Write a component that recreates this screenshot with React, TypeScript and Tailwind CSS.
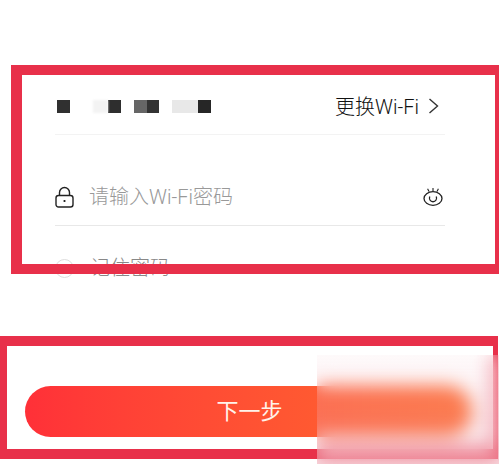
export default function App() {
  return (
    <div className="relative w-[499px] h-[464px] overflow-hidden bg-white font-['Roboto','Noto_Sans_CJK_SC',sans-serif] font-light">
      <div className="flex flex-col pl-[55px] pr-[54px] pt-[85px]">
        {/* Wi-Fi name row */}
        <div className="flex items-center justify-between h-[50px] border-b border-[#f3f3f3] pb-[7px]">
          <div className="flex items-center h-[13px] w-[156px] pl-[2px]">
            <div className="w-[13px] h-[13px] bg-[#303030]" />
            <div className="ml-[23px] w-[15px] h-[13px] bg-[#f3f3f3] blur-[1px]" />
            <div className="w-[13px] h-[13px] bg-[#2e2e2e]" />
            <div className="ml-[13px] w-[13px] h-[13px] bg-[#666666]" />
            <div className="w-[12px] h-[13px] bg-[#333333]" />
            <div className="ml-[13px] w-[26px] h-[13px] bg-[#e8e8e8]" />
            <div className="w-[13px] h-[13px] bg-[#262626]" />
          </div>
          <div className="flex items-center text-[20px] leading-none text-[#111111]">
            <span className="pt-[2px] pl-[2px]">更换Wi-Fi</span>
            <svg className="ml-[9px] mr-[6px]" width="11" height="16" viewBox="0 0 11 16" fill="none" stroke="#333" strokeWidth="1.4">
              <path d="M1.5 1 L9.5 8 L1.5 15" />
            </svg>
          </div>
        </div>
        {/* Password row */}
        <div className="mt-[41px] flex items-center h-[50px] border-b border-[#e8e8e8] pb-[8px]">
          <svg width="19" height="22" viewBox="0 0 19 22" fill="none" stroke="#222" strokeWidth="1.4">
            <path d="M4.5 10 V6.5 a5 5 0 0 1 10 0 V10" />
            <rect x="1" y="9.5" width="17" height="11.5" rx="2.5" />
            <path d="M9.5 14 V16" strokeWidth="1.8" />
          </svg>
          <span className="ml-[15px] flex-1 text-[20px] leading-none text-[#999999]">请输入Wi-Fi密码</span>
          <svg className="mr-[2px]" width="20" height="19" viewBox="0 0 20 19" fill="none" stroke="#222" strokeWidth="1.3">
            <ellipse cx="10" cy="11.5" rx="9" ry="6.8" />
            <path d="M6.8 9.5 a3.6 3.6 0 1 0 6.4 0" />
            <path d="M6 4.6 L4.6 1.8 M10 4 V1 M14 4.6 L15.4 1.8" strokeWidth="1.1" />
          </svg>
        </div>
        {/* Remember row */}
        <div className="mt-[32px] flex items-center">
          <div className="w-[19px] h-[19px] rounded-full border border-[#dddddd]" />
          <span className="ml-[16px] text-[20px] leading-none text-[#888888]">记住密码</span>
        </div>
        {/* Next button */}
        <button className="mt-[108px] -ml-[30px] w-[447px] h-[51px] rounded-full bg-gradient-to-r from-[#ff3038] to-[#ff6a2c] text-[22px] font-normal leading-none text-[#fff3ea] pl-[2px]">
          下一步
        </button>
      </div>

      {/* Annotation frames over the content */}
      <div className="absolute left-[11px] top-[65px] w-[488px] h-[209px] border-[10px] border-r-[4px] border-l-[11px] border-[#e8304a]" />
      <div className="absolute left-0 top-[336px] w-[498px] h-[123px] border-[10px] border-r-[5px] border-l-[7px] border-[#e8304a]" />

      {/* Blurred patch */}
      <div className="absolute left-[317px] top-[355px] w-[182px] h-[109px] backdrop-blur-[9px] bg-gradient-to-b from-[#f5c8d0]/10 to-[#eeb0bc]/40" />
    </div>
  );
}
